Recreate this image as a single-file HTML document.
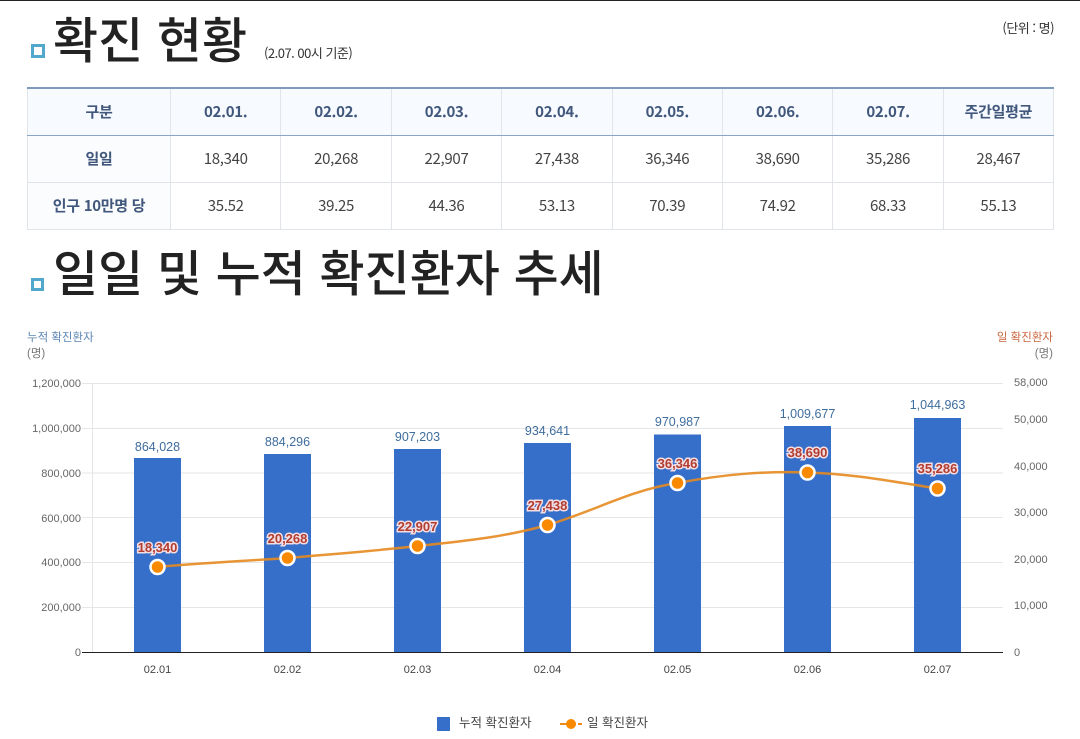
<!DOCTYPE html>
<html lang="ko">
<head>
<meta charset="utf-8">
<title>확진 현황</title>
<style>
html,body{margin:0;padding:0;background:#fff;}
body{width:1080px;height:739px;overflow:hidden;position:relative;font-family:"Liberation Sans","Noto Sans CJK KR",sans-serif;}
.topline{position:absolute;left:0;top:0;width:1080px;height:1px;background:#222;}
.abs{position:absolute;white-space:nowrap;}
.h{font-family:"Noto Sans CJK KR",sans-serif;font-weight:500;font-size:49px;line-height:60px;color:#222;}
.sq{position:absolute;width:8px;height:8px;border:3px solid #52a8cc;background:#fff;}
.note{font-family:"Noto Sans CJK KR",sans-serif;font-size:13px;line-height:18px;color:#333;letter-spacing:-.5px;}
table{position:absolute;left:27px;top:87px;width:1027px;height:143px;border-collapse:collapse;table-layout:fixed;font-family:"Noto Sans CJK KR",sans-serif;border-top:2px solid #7e9bbd;}
td,th{border:1px solid #e1e4e9;text-align:center;padding:0 0 2px;font-size:15px;color:#444;font-weight:400;letter-spacing:-.3px;}
th{background:#f7faff;color:#41587c;font-weight:700;font-size:15px;}
tr.head th{border-bottom:1px solid #8ba5c6;height:44px;}
tr.r1 td,tr.r1 th{height:44px;}
tbody th{background:#fbfcfe;}
svg{position:absolute;left:0;top:0;}
svg text{font-family:"Liberation Sans","Noto Sans CJK KR",sans-serif;}
</style>
</head>
<body>
<div class="topline"></div>
<div class="sq" style="left:31px;top:44px"></div>
<div class="abs h" style="left:53px;top:8px">확진 현황</div>
<div class="abs note" style="left:264px;top:44px">(2.07. 00시 기준)</div>
<div class="abs note" style="right:26px;top:19px">(단위 : 명)</div>
<table>
<colgroup><col style="width:143px"><col span="8" style="width:110.4px"></colgroup>
<thead><tr class="head"><th>구분</th><th>02.01.</th><th>02.02.</th><th>02.03.</th><th>02.04.</th><th>02.05.</th><th>02.06.</th><th>02.07.</th><th>주간일평균</th></tr></thead>
<tbody>
<tr class="r1"><th>일일</th><td>18,340</td><td>20,268</td><td>22,907</td><td>27,438</td><td>36,346</td><td>38,690</td><td>35,286</td><td>28,467</td></tr>
<tr><th>인구 10만명 당</th><td>35.52</td><td>39.25</td><td>44.36</td><td>53.13</td><td>70.39</td><td>74.92</td><td>68.33</td><td>55.13</td></tr>
</tbody>
</table>
<div class="sq" style="left:31px;top:278px;width:7px;height:7px"></div>
<div class="abs h" style="left:53px;top:241px">일일 및 누적 확진환자 추세</div>

<svg width="1080" height="739" viewBox="0 0 1080 739">
<g font-size="11.5">
<text x="27" y="341" fill="#5b86b3">누적 확진환자</text>
<text x="27" y="357" fill="#777">(명)</text>
<text x="1053" y="341" fill="#c9673f" text-anchor="end">일 확진환자</text>
<text x="1053" y="357" fill="#777" text-anchor="end">(명)</text>
</g>
<g stroke="#e6e6e6" stroke-width="1">
<path d="M82 383.5H1003M82 428.5H1003M82 473H1003M82 517.5H1003M82 562.5H1003M82 607.5H1003"/>
<path d="M92.5 383V652"/>
</g>
<path d="M82 652.5H1003" stroke="#222" stroke-width="1"/>
<g fill="#666" font-size="11" text-anchor="end">
<text x="81" y="387">1,200,000</text>
<text x="81" y="432">1,000,000</text>
<text x="81" y="477">800,000</text>
<text x="81" y="522">600,000</text>
<text x="81" y="566">400,000</text>
<text x="81" y="611">200,000</text>
<text x="81" y="656">0</text>
</g>
<g fill="#666" font-size="11">
<text x="1014" y="386">58,000</text>
<text x="1014" y="423">50,000</text>
<text x="1014" y="470">40,000</text>
<text x="1014" y="516">30,000</text>
<text x="1014" y="563">20,000</text>
<text x="1014" y="609">10,000</text>
<text x="1014" y="656">0</text>
</g>
<g fill="#356fc9">
<rect x="134" y="458" width="47" height="194"/>
<rect x="264" y="454" width="47" height="198"/>
<rect x="394" y="449" width="47" height="203"/>
<rect x="524" y="443" width="47" height="209"/>
<rect x="654" y="434.5" width="47" height="217.5"/>
<rect x="784" y="426" width="47" height="226"/>
<rect x="914" y="418" width="47" height="234"/>
</g>
<g fill="#3f6d9e" font-size="12.5" text-anchor="middle">
<text x="157.5" y="451">864,028</text>
<text x="287.5" y="446">884,296</text>
<text x="417.5" y="441">907,203</text>
<text x="547.5" y="435">934,641</text>
<text x="677.5" y="426">970,987</text>
<text x="807.5" y="418">1,009,677</text>
<text x="937.5" y="409">1,044,963</text>
</g>
<path d="M157.5 567C200 563 245 561 287.5 558C332 554 375 551 417.5 546C465 541 505 537 547.5 525C595 511 630 490 677.5 483C725 474 765 471 807.5 472.5C855 474 895 482 937.5 488.5" fill="none" stroke="#e68a1f" stroke-opacity=".9" stroke-width="2.5"/>
<g fill="#f98a00" stroke="#fff" stroke-width="2.5">
<circle cx="157.5" cy="567" r="7"/>
<circle cx="287.5" cy="558" r="7"/>
<circle cx="417.5" cy="546" r="7"/>
<circle cx="547.5" cy="525" r="7"/>
<circle cx="677.5" cy="483" r="7"/>
<circle cx="807.5" cy="472.5" r="7"/>
<circle cx="937.5" cy="488.5" r="7"/>
</g>
<g fill="#b23c30" font-size="13" font-weight="700" text-anchor="middle" stroke="#f3dfe3" stroke-width="3" paint-order="stroke">
<text x="157.5" y="552">18,340</text>
<text x="287.5" y="543">20,268</text>
<text x="417.5" y="531">22,907</text>
<text x="547.5" y="510">27,438</text>
<text x="677.5" y="468">36,346</text>
<text x="807.5" y="457">38,690</text>
<text x="937.5" y="473">35,286</text>
</g>
<g fill="#444" font-size="11" text-anchor="middle">
<text x="157.5" y="673">02.01</text>
<text x="287.5" y="673">02.02</text>
<text x="417.5" y="673">02.03</text>
<text x="547.5" y="673">02.04</text>
<text x="677.5" y="673">02.05</text>
<text x="807.5" y="673">02.06</text>
<text x="937.5" y="673">02.07</text>
</g>
<rect x="437" y="717" width="13" height="14" fill="#356fc9"/>
<text x="459" y="727" fill="#444" font-size="12.5">누적 확진환자</text>
<path d="M560 724H582" stroke="#f08a1a" stroke-width="2" stroke-dasharray="7 2"/>
<circle cx="571" cy="724" r="5" fill="#f98a00"/>
<text x="587" y="727" fill="#444" font-size="12.5">일 확진환자</text>
</svg>
</body>
</html>
